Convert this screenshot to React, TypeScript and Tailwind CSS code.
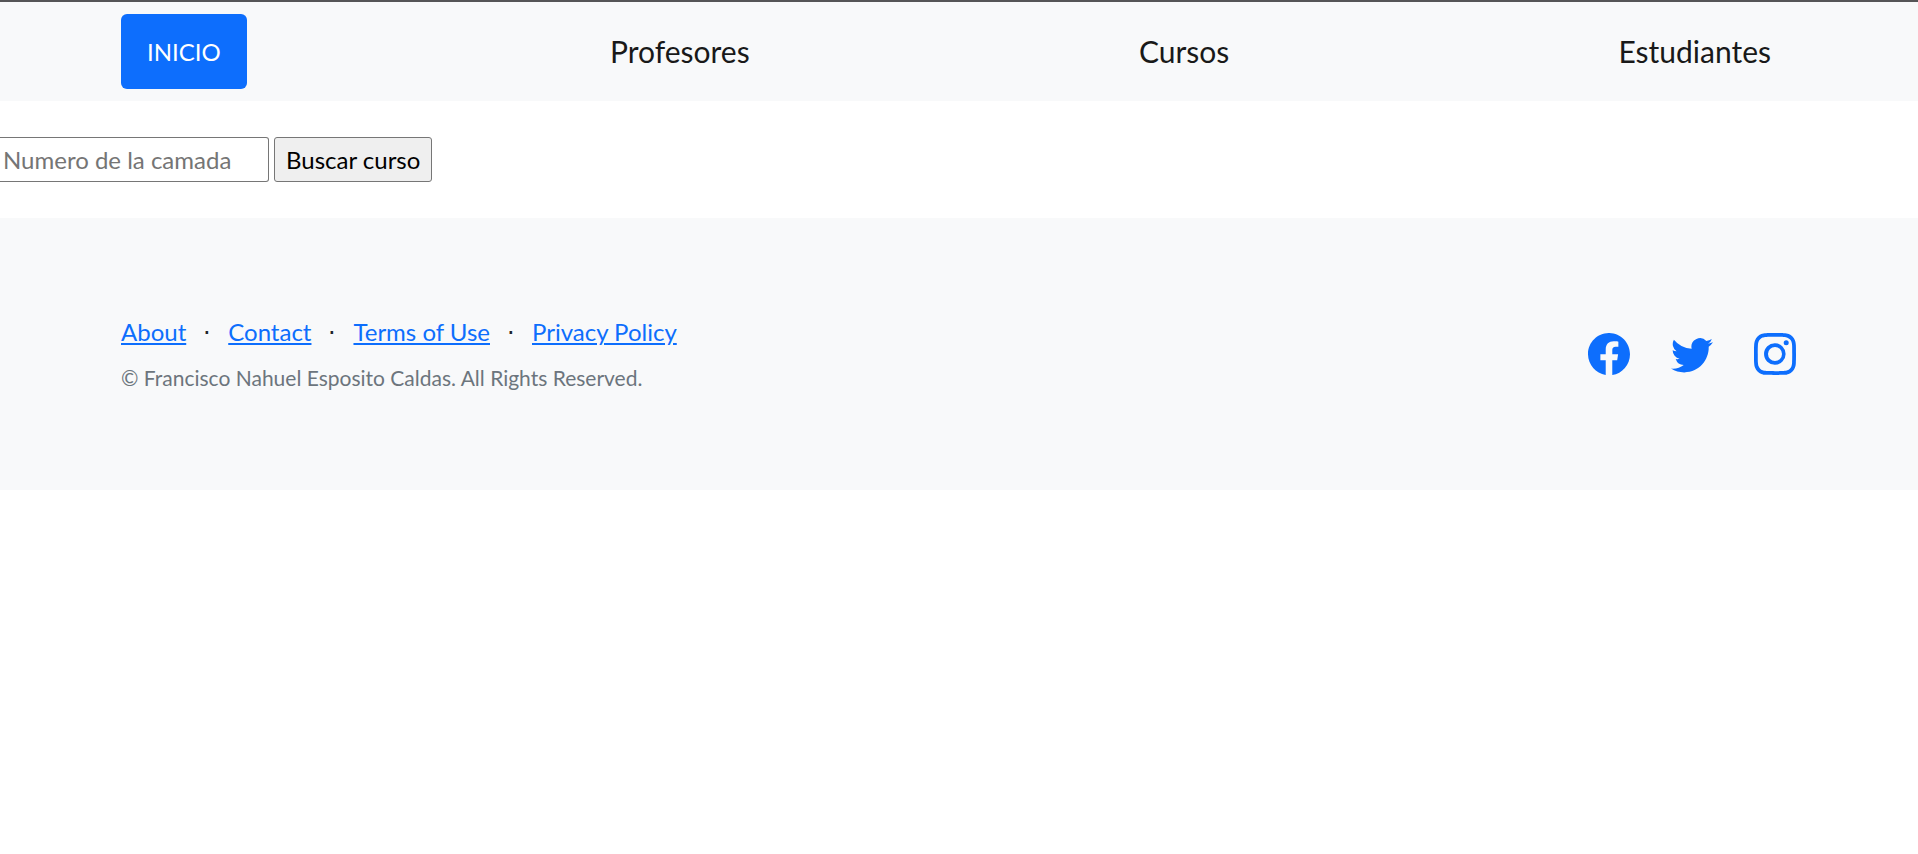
import { Fragment } from 'react';
import { BsFacebook, BsInstagram, BsTwitter } from 'react-icons/bs';

const sections = ['Profesores', 'Cursos', 'Estudiantes'];
const footerLinks = ['About', 'Contact', 'Terms of Use', 'Privacy Policy'];
const socials = [
  { label: 'Facebook', Icon: BsFacebook },
  { label: 'Twitter', Icon: BsTwitter },
  { label: 'Instagram', Icon: BsInstagram },
];

function Header() {
  return (
    <header className="border-t-2 border-[#555557] bg-[#f8f9fa] py-3">
      <nav className="mx-auto flex max-w-[1710px] items-center justify-between pr-[17px] pl-[17px]">
        <a href="#inicio" className="rounded-md bg-[#0d6efd] px-[26px] py-5 text-2xl leading-[35px] text-white">
          INICIO
        </a>
        {sections.map((name) => (
          <a
            key={name}
            href={`#${name.toLowerCase()}`}
            className="px-[26px] text-[30px] leading-[45px] text-[#191919]"
          >
            {name}
          </a>
        ))}
      </nav>
    </header>
  );
}

function CourseSearch() {
  return (
    <main className="py-9">
      <form className="flex gap-[5px]" onSubmit={(e) => e.preventDefault()}>
        <input
          type="text"
          aria-label="Numero de la camada"
          placeholder="Numero de la camada"
          className="h-[45px] w-[269px] rounded-r-[3px] border border-l-0 border-[#767676] bg-white px-[3px] text-2xl text-black placeholder:text-[#757575]"
        />
        <button
          type="submit"
          className="h-[45px] rounded-[3px] border border-[#767676] bg-[#efefef] px-[11px] text-2xl text-black"
        >
          Buscar curso
        </button>
      </form>
    </main>
  );
}

function Footer() {
  return (
    <footer className="bg-[#f8f9fa] py-24">
      <div className="mx-auto flex max-w-[1710px] items-center justify-between pr-[18px] pl-[17px]">
        <div>
          <ul className="mb-3 flex text-2xl leading-9">
            {footerLinks.map((name, i) => (
              <Fragment key={name}>
                {i > 0 && <li className="w-[42px] text-center">⋅</li>}
                <li>
                  <a href="#" className="text-[#0d6efd] underline">
                    {name}
                  </a>
                </li>
              </Fragment>
            ))}
          </ul>
          <p className="text-[21px] leading-8 text-[#6c757d]">
            © Francisco Nahuel Esposito Caldas. All Rights Reserved.
          </p>
        </div>
        <ul className="flex gap-[41px]">
          {socials.map(({ label, Icon }) => (
            <li key={label}>
              <a href="#" aria-label={label} className="block text-[#0d6efd]">
                <Icon className="size-[42px]" />
              </a>
            </li>
          ))}
        </ul>
      </div>
    </footer>
  );
}

export default function App() {
  return (
    <div className="bg-white font-['Lato',sans-serif] text-[#212529]">
      <Header />
      <CourseSearch />
      <Footer />
    </div>
  );
}
